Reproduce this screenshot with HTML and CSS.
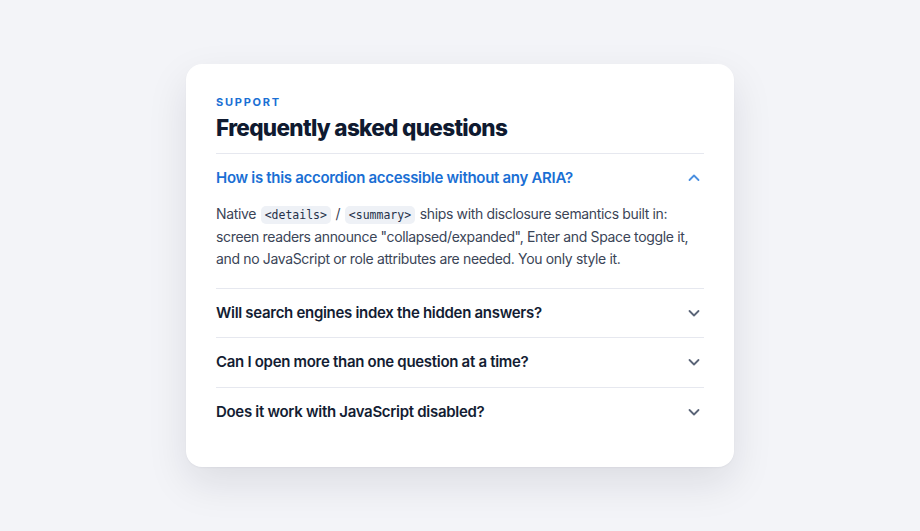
FILE: index.html
```html
<!DOCTYPE html>
<html lang="en">
<head>
  <meta charset="UTF-8">
  <meta name="viewport" content="width=device-width, initial-scale=1.0">
  <title>FAQ</title>
  <link rel="stylesheet" href="styles.css">
</head>
<body>

  <section class="faq-card">
    <p class="eyebrow">Support</p>
    <h1>Frequently asked questions</h1>

    <details class="faq-item" open>
      <summary>
        <span>How is this accordion accessible without any ARIA?</span>
        <svg class="chevron" viewBox="0 0 16 16" width="16" height="16"><path d="M3.5 6 8 10.5 12.5 6"/></svg>
      </summary>
      <p class="answer">Native <code>&lt;details&gt;</code> / <code>&lt;summary&gt;</code> ships with disclosure semantics built in: screen readers announce "collapsed/expanded", Enter and Space toggle it, and no JavaScript or role attributes are needed. You only style it.</p>
    </details>

    <details class="faq-item">
      <summary>
        <span>Will search engines index the hidden answers?</span>
        <svg class="chevron" viewBox="0 0 16 16" width="16" height="16"><path d="M3.5 6 8 10.5 12.5 6"/></svg>
      </summary>
      <p class="answer">Yes. The content is in the HTML, it is only collapsed visually.</p>
    </details>

    <details class="faq-item">
      <summary>
        <span>Can I open more than one question at a time?</span>
        <svg class="chevron" viewBox="0 0 16 16" width="16" height="16"><path d="M3.5 6 8 10.5 12.5 6"/></svg>
      </summary>
      <p class="answer">By default, yes. Give the items the same name attribute to make them exclusive.</p>
    </details>

    <details class="faq-item">
      <summary>
        <span>Does it work with JavaScript disabled?</span>
        <svg class="chevron" viewBox="0 0 16 16" width="16" height="16"><path d="M3.5 6 8 10.5 12.5 6"/></svg>
      </summary>
      <p class="answer">It does. Toggling is handled entirely by the browser.</p>
    </details>
  </section>

</body>
</html>
```

FILE: styles.css
```css
body {
  font-family: Inter, "Noto Sans", sans-serif;
  background: #f3f4f8;
  margin: 0;
  min-height: 100vh;
  display: flex;
  align-items: center;
  justify-content: center;
}

.faq-card {
  background: #fff;
  width: 548px;
  box-sizing: border-box;
  padding: 30px 30px 31px;
  border-radius: 16px;
  box-shadow: 0 1px 2px rgba(15, 23, 42, 0.04), 0 16px 40px rgba(15, 23, 42, 0.1);
}

.eyebrow {
  margin: 0 0 4px;
  font-size: 11px;
  line-height: 16px;
  font-weight: 700;
  letter-spacing: 0.16em;
  text-transform: uppercase;
  color: #1a6fd4;
}

h1 {
  margin: 0 0 11px;
  font-size: 22.5px;
  line-height: 28px;
  font-weight: 800;
  letter-spacing: -0.03em;
  color: #0f1a30;
}

.faq-item {
  border-top: 1px solid #e6e8ef;
}

.faq-item summary {
  list-style: none;
  display: flex;
  align-items: center;
  justify-content: space-between;
  padding: 12px 0;
  font-size: 15px;
  line-height: 24.5px;
  font-weight: 600;
  letter-spacing: -0.02em;
  color: #131d33;
  cursor: pointer;
}

.faq-item summary::-webkit-details-marker {
  display: none;
}

.chevron {
  fill: none;
  stroke: #5b6578;
  stroke-width: 1.8;
  stroke-linecap: round;
  stroke-linejoin: round;
  margin-right: 2px;
}

.faq-item[open] summary {
  color: #1a6fd4;
}

.faq-item[open] .chevron {
  stroke: #4b8fe0;
  transform: rotate(180deg);
}

.answer {
  margin: 0;
  padding: 0 0 18px;
  font-size: 14px;
  line-height: 22px;
  letter-spacing: -0.025em;
  color: #3b4557;
}

.answer code {
  font-family: "DejaVu Sans Mono", monospace;
  font-size: 11.5px;
  letter-spacing: 0;
  background: #eef1f6;
  color: #26314a;
  padding: 2px 4px;
  margin: 0 1px;
  border-radius: 5px;
}
```
